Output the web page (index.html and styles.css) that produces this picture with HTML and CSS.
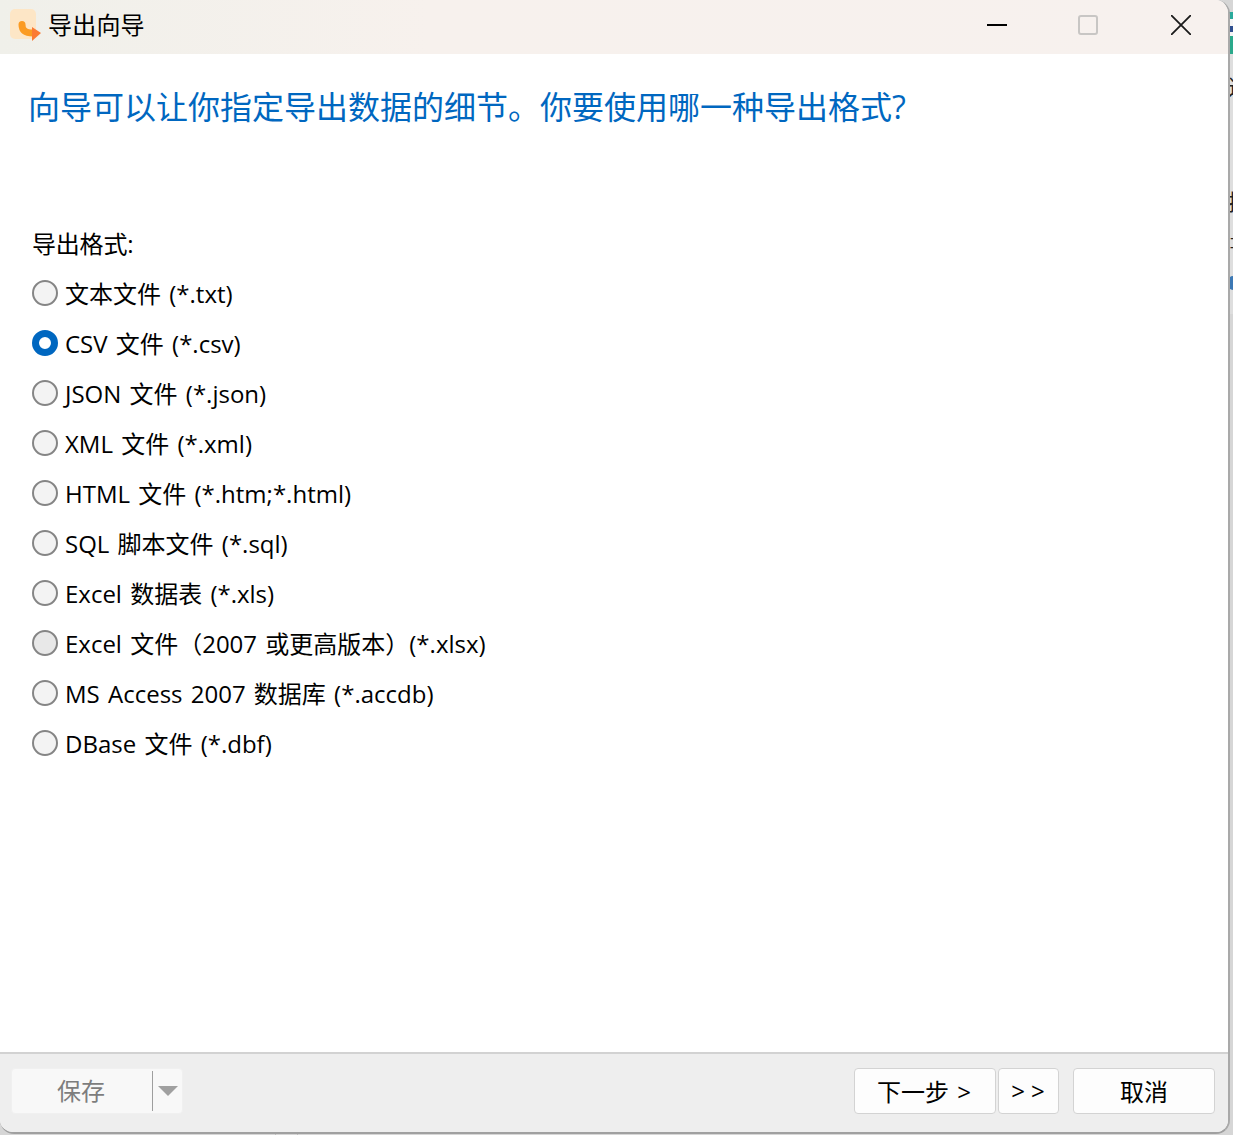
FILE: index.html
```html
<!DOCTYPE html>
<html lang="zh">
<head>
<meta charset="utf-8">
<title>导出向导</title>
<link rel="stylesheet" href="styles.css">
</head>
<body>
<div class="backdrop" aria-hidden="true">
  <span class="bg-frag bg-a"></span>
  <span class="bg-frag bg-b">这</span>
  <span class="bg-frag bg-c"></span>
  <span class="bg-frag bg-d">据</span>
  <span class="bg-frag bg-e">コ</span>
  <span class="bg-frag bg-f"></span>
  <span class="bg-line bg-l1"></span>
  <span class="bg-line bg-l2"></span>
</div>
<div class="window">
  <header class="titlebar">
    <svg class="app-icon" width="32" height="33" viewBox="0 0 32 33">
      <rect x="0" y="0" width="26" height="30" rx="5" fill="#fde6c6"/>
      <path d="M12 15.500 C12 20 14 24 23 24" fill="none" stroke="#fb9b22" stroke-width="7" stroke-linecap="round"/>
      <path d="M22 18 L31 24 L22 32 Z" fill="#fb7a33"/>
    </svg>
    <span class="title">导出向导</span>
    <div class="win-controls">
      <svg class="ctl ctl-min" width="20" height="20" viewBox="0 0 20 20"><path d="M0 10 H20" stroke="#000" stroke-width="2"/></svg>
      <svg class="ctl ctl-max" width="20" height="20" viewBox="0 0 20 20"><rect x="1" y="1" width="18" height="18" rx="2" fill="none" stroke="#c8c6c4" stroke-width="2"/></svg>
      <svg class="ctl" width="20" height="20" viewBox="0 0 20 20"><path d="M0 0 L20 20 M20 0 L0 20" stroke="#1a1a1a" stroke-width="1.800"/></svg>
    </div>
  </header>
  <main class="content">
    <h1 class="heading">向导可以让你指定导出数据的细节。你要使用哪一种导出格式?</h1>
    <div class="group-label">导出格式:</div>
    <ul class="options">
      <li class="option"><span class="radio"></span><span class="opt-text">文本文件 (*.txt)</span></li>
      <li class="option"><span class="radio checked"></span><span class="opt-text">CSV 文件 (*.csv)</span></li>
      <li class="option"><span class="radio"></span><span class="opt-text">JSON 文件 (*.json)</span></li>
      <li class="option"><span class="radio"></span><span class="opt-text">XML 文件 (*.xml)</span></li>
      <li class="option"><span class="radio"></span><span class="opt-text">HTML 文件 (*.htm;*.html)</span></li>
      <li class="option"><span class="radio"></span><span class="opt-text">SQL 脚本文件 (*.sql)</span></li>
      <li class="option"><span class="radio"></span><span class="opt-text">Excel 数据表 (*.xls)</span></li>
      <li class="option"><span class="radio hover"></span><span class="opt-text">Excel 文件（2007 或更高版本）(*.xlsx)</span></li>
      <li class="option"><span class="radio"></span><span class="opt-text">MS Access 2007 数据库 (*.accdb)</span></li>
      <li class="option"><span class="radio"></span><span class="opt-text">DBase 文件 (*.dbf)</span></li>
    </ul>
  </main>
  <footer class="footer">
    <div class="save-btn">
      <span class="save-label">保存</span>
      <span class="save-sep"></span>
      <span class="save-caret"></span>
    </div>
    <div class="spacer"></div>
    <button class="btn btn-next">下一步 &gt;</button>
    <button class="btn btn-skip">&gt; &gt;</button>
    <button class="btn btn-cancel">取消</button>
  </footer>
</div>
</body>
</html>
```
FILE: styles.css
```css
* { box-sizing: border-box; }
html, body { margin: 0; padding: 0; }
body {
  width: 1233px;
  height: 1135px;
  overflow: hidden;
  position: relative;
  background: #d6d6d6;
  font-family: "Open Sans", "Noto Sans CJK SC", sans-serif;
  color: #000;
}
.backdrop { position: absolute; inset: 0; }
.bg-frag { position: absolute; left: 1228px; font-size: 22px; line-height: 24px; font-family: "Noto Sans CJK SC", sans-serif; color: #222; white-space: nowrap; }
.bg-a { top: 12px; width: 5px; height: 42px; background: linear-gradient(#2aa99b 0 7px, #f4f4f4 7px 14px, #2f4f8f 14px 20px, #f4f4f4 20px 24px, #2aa98b 24px 42px); }
.bg-b { top: 73px; }
.bg-c { top: 54px; width: 5px; height: 260px; background: #dedede; z-index: -1; }
.bg-d { top: 188px; }
.bg-e { top: 230px; font-size: 16px; }
.bg-f { top: 276px; width: 5px; height: 14px; border-radius: 5px 0 0 5px; background: #3c78b4; }
.bg-line { position: absolute; background: #bdbdbd; }
.bg-l1 { left: 275px; top: 1132px; width: 1px; height: 3px; }
.bg-l2 { left: 297px; top: 1132px; width: 1px; height: 3px; }
.window {
  position: absolute;
  left: 0;
  top: 0;
  width: 1230px;
  height: 1134px;
  display: flex;
  flex-direction: column;
  background: #fff;
  border-radius: 0 14px 14px 14px;
  border-right: 2px solid #a9a9a9;
  border-bottom: 2px solid #a0a0a0;
  overflow: hidden;
}
.titlebar {
  height: 54px;
  flex: none;
  display: flex;
  align-items: center;
  padding-left: 10px;
  background: linear-gradient(90deg, #f0f0ea 0%, #f7f1ed 35%, #f7f1ee 100%);
}
.app-icon { flex: none; align-self: flex-start; margin-top: 9px; margin-right: 6px; }
.title { font-size: 24px; font-family: "Noto Sans CJK SC", sans-serif; line-height: 54px; margin-top: -7px; letter-spacing: 0.2px; }
.win-controls { margin-left: auto; display: flex; align-items: center; margin-right: 37px; margin-top: -4px; }
.ctl { display: block; }
.ctl-min { margin-right: 71px; }
.ctl-max { margin-right: 73px; }
.content { flex: 1; min-height: 0; padding: 29px 0 0 28px; }
.heading {
  margin: 0;
  font-size: 32px;
  line-height: 48px;
  font-weight: 400;
  color: #0067c0;
  white-space: nowrap;
}
.group-label { font-size: 24px; line-height: 36px; margin: 95px 0 0 4px; letter-spacing: -0.2px; }
.options { list-style: none; margin: 7px 0 0 4px; padding: 0; }
.option { display: flex; align-items: center; height: 50px; font-size: 24px; white-space: nowrap; gap: 7px; }
.opt-text { word-spacing: 2px; padding-bottom: 4px; }
.radio {
  flex: none;
  width: 26px;
  height: 26px;
  border-radius: 50%;
  border: 2px solid #858585;
  background: #f3f3f3;
  margin-top: -2px;
}
.radio.checked { border: 7px solid #0067c0; background: #fff; }
.radio.hover { background: #e8e8e8; }
.footer {
  flex: none;
  height: 80px;
  background: #eeeeee;
  border-top: 2px solid #d2d2d2;
  display: flex;
  align-items: flex-start;
  padding: 14px 13px 0 11px;
}
.save-btn {
  width: 172px;
  height: 46px;
  background: #f8f8f8;
  border: 1px solid #f0f0f0;
  border-radius: 4px;
  display: flex;
  align-items: center;
}
.save-label { width: 140px; padding: 0 2px 2px 0; text-align: center; font-size: 24px; color: #7d7d7d; line-height: 44px; font-family: "Noto Sans CJK SC", sans-serif; }
.save-sep { width: 1px; height: 40px; background: #9e9e9e; }
.save-caret {
  width: 0;
  height: 0;
  margin-left: 5px;
  border-left: 10px solid transparent;
  border-right: 10px solid transparent;
  border-top: 10px solid #a0a0a0;
}
.spacer { flex: 1; }
.btn {
  height: 46px;
  background: #fdfdfd;
  border: 1px solid #d3d3d3;
  border-radius: 4px;
  font-size: 24px;
  font-family: inherit;
  color: #000;
  padding: 0 0 2px;
  white-space: nowrap;
  word-spacing: 2px;
}
.btn-next { width: 142px; padding-right: 2px; }
.btn-skip { width: 61px; margin-left: 2px; word-spacing: 0; padding-right: 1px; }
.btn-cancel { width: 142px; margin-left: 14px; }
```
